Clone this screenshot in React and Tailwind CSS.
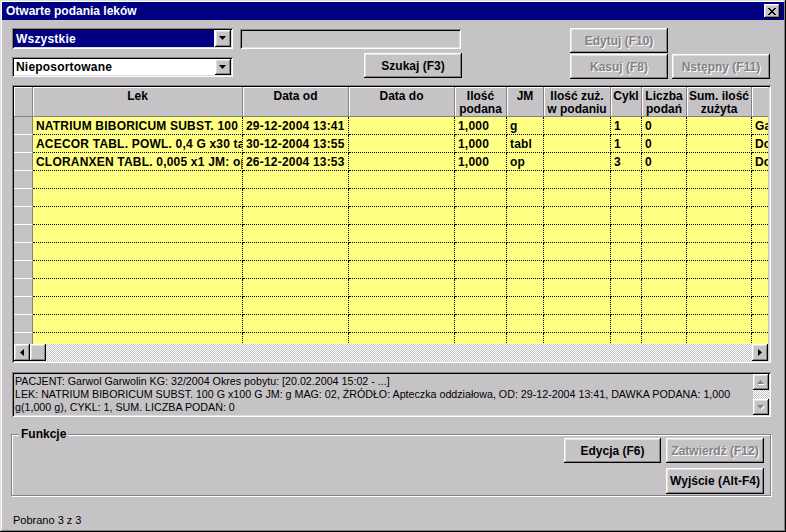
import React from "react";

const raised =
  "shadow-[inset_-1px_-1px_0_#000,inset_1px_1px_0_#fff,inset_-2px_-2px_0_#848284,inset_2px_2px_0_#dfdfdf]";
const sunken =
  "shadow-[inset_1px_1px_0_#848284,inset_-1px_-1px_0_#fff,inset_2px_2px_0_#000,inset_-2px_-2px_0_#dfdfdf]";
const checker =
  "bg-[image:repeating-conic-gradient(#c6c3c6_0_25%,#ffffff_0_50%)] bg-[length:2px_2px]";

const columns = [
  { title: ["Lek"], w: "w-[210px]" },
  { title: ["Data od"], w: "w-[106px]" },
  { title: ["Data do"], w: "w-[106px]" },
  { title: ["Ilość", "podana"], w: "w-[52px]" },
  { title: ["JM"], w: "w-[37px]" },
  { title: ["Ilość zuż.", "w podaniu"], w: "w-[67px]" },
  { title: ["Cykl"], w: "w-[31px]" },
  { title: ["Liczba", "podań"], w: "w-[45px]" },
  { title: ["Sum. ilość", "zużyta"], w: "w-[65px]" },
  { title: [""], w: "w-[60px]" },
];

const rows = [
  ["NATRIUM BIBORICUM SUBST. 100 G x100 G", "29-12-2004 13:41", "", "1,000", "g", "", "1", "0", "", "Gabinet"],
  ["ACECOR TABL. POWL. 0,4 G x30 tabl", "30-12-2004 13:55", "", "1,000", "tabl", "", "1", "0", "", "Domowe"],
  ["CLORANXEN TABL. 0,005 x1 JM: op", "26-12-2004 13:53", "", "1,000", "op", "", "3", "0", "", "Domowe"],
];

const Arrow = ({ dir, disabled }) => {
  const pts = {
    down: "0,0 7,0 3.5,4",
    up: "0,4 7,4 3.5,0",
    left: "4,0 4,7 0,3.5",
    right: "0,0 0,7 4,3.5",
  }[dir];
  const vertical = dir === "up" || dir === "down";
  const w = vertical ? 7 : 4;
  const h = vertical ? 4 : 7;
  return (
    <svg width={w + 1} height={h + 1} viewBox={`0 0 ${w + 1} ${h + 1}`}>
      {disabled && <polygon points={pts} fill="#fff" transform="translate(1,1)" />}
      <polygon points={pts} fill={disabled ? "#848284" : "#000"} />
    </svg>
  );
};

const Btn = ({ children, disabled, className = "" }) => (
  <div
    className={`${raised} flex items-center justify-center text-[12px] font-bold bg-[#c6c3c6] ${
      disabled ? "text-[#848284] [text-shadow:1px_1px_0_#fff]" : "text-black"
    } ${className}`}
  >
    {children}
  </div>
);

const Combo = ({ value, selected, className = "" }) => (
  <div className={`${sunken} bg-white flex p-[2px] w-[221px] ${className}`}>
    <div
      className={`flex-1 flex items-center pl-[2px] text-[12px] font-bold tracking-[0.2px] ${
        selected ? "bg-[#000080] text-white mr-[1px]" : "text-black"
      }`}
    >
      {value}
    </div>
    <div className={`${raised} w-[16px] bg-[#c6c3c6] flex items-center justify-center`}>
      <Arrow dir="down" />
    </div>
  </div>
);

export default function App() {
  return (
    <div className="w-[786px] h-[532px] bg-[#c6c3c6] overflow-hidden pt-[2px] px-[2px] shadow-[inset_-1px_-1px_0_#000,inset_1px_1px_0_#dfdfdf,inset_-2px_-2px_0_#848284,inset_2px_2px_0_#fff] font-['Liberation_Sans',Arial,sans-serif] text-black">
      {/* title bar */}
      <div className="h-[18px] bg-[#000080] flex items-center justify-between pl-[4px] pr-[4px]">
        <span className="text-white text-[12px] font-bold">Otwarte podania leków</span>
        <div className={`${raised} w-[16px] h-[14px] bg-[#c6c3c6] flex items-center justify-center`}>
          <svg width="8" height="7" viewBox="0 0 8 7" shapeRendering="crispEdges">
            <path d="M0 0h2v1H0zM6 0h2v1H6zM1 1h2v1H1zM5 1h2v1H5zM2 2h4v1H2zM3 3h2v1H3zM2 4h4v1H2zM1 5h2v1H1zM5 5h2v1H5zM0 6h2v1H0zM6 6h2v1H6z" fill="#000" />
          </svg>
        </div>
      </div>

      <div className="pl-[10px]">
        {/* top controls */}
        <div className="flex mt-[8px] h-[57px]">
          <div className="flex flex-col">
            <Combo value="Wszystkie" selected className="h-[21px]" />
            <Combo value="Nieposortowane" className="h-[20px] mt-[8px]" />
          </div>
          <div className="flex flex-col ml-[7px] w-[222px]">
            <div className={`${sunken} h-[20px] w-[221px] mt-[1px] bg-[#c6c3c6]`} />
            <Btn className="w-[98px] h-[25px] mt-[4px] self-end">Szukaj (F3)</Btn>
          </div>
          <div className="flex flex-col ml-[108px]">
            <Btn disabled className="w-[98px] h-[25px]">Edytuj (F10)</Btn>
            <div className="flex gap-[4px] mt-[1px]">
              <Btn disabled className="w-[98px] h-[25px]">Kasuj (F8)</Btn>
              <Btn disabled className="w-[98px] h-[25px]">Nstępny (F11)</Btn>
            </div>
          </div>
        </div>

        {/* grid */}
        <div className={`${sunken} w-[759px] h-[278px] p-[2px] flex flex-col`}>
          <div className="w-[754px] overflow-hidden flex-1 flex flex-col">
            <div className="flex h-[30px] shrink-0 border-b border-b-[#848284]">
              <div className="w-[19px] shrink-0 border-r border-r-[#848284] shadow-[inset_1px_1px_0_#fff]" />
              {columns.map((c, i) => (
                <div
                  key={i}
                  className={`${c.w} shrink-0 border-r border-r-[#848284] shadow-[inset_1px_1px_0_#fff] pt-[3px] text-center text-[12px] font-bold leading-[13px]`}
                >
                  {c.title.map((t, j) => (
                    <div key={j} className="whitespace-nowrap">{t}</div>
                  ))}
                </div>
              ))}
            </div>
            <div className="h-[227px] overflow-hidden">
              {Array.from({ length: 13 }).map((_, r) => (
                <div key={r} className="flex h-[18px]">
                  <div className="w-[19px] shrink-0 bg-[#c6c3c6] border-b border-b-white border-r border-r-[#848284]" />
                  {columns.map((c, i) => (
                    <div
                      key={i}
                      className={`${c.w} shrink-0 bg-[#ffff84] border-r border-b border-dotted border-black overflow-hidden whitespace-nowrap pl-[3px] text-[12px] font-bold tracking-[0.2px] leading-[19px]`}
                    >
                      {rows[r] ? rows[r][i] : ""}
                    </div>
                  ))}
                </div>
              ))}
            </div>
            <div className="h-[17px] flex shrink-0">
              <div className={`${raised} w-[16px] bg-[#c6c3c6] flex items-center justify-center`}>
                <Arrow dir="left" />
              </div>
              <div className={`${raised} w-[16px] bg-[#c6c3c6]`} />
              <div className={`flex-1 ${checker}`} />
              <div className={`${raised} w-[16px] bg-[#c6c3c6] flex items-center justify-center`}>
                <Arrow dir="right" />
              </div>
            </div>
          </div>
        </div>

        {/* info box */}
        <div className={`${sunken} w-[759px] h-[45px] mt-[9px] p-[2px] flex`}>
          <div className="flex-1 pl-[1px] pt-[1px] text-[10.7px] leading-[13px] whitespace-nowrap overflow-hidden">
            <div>PACJENT: Garwol Garwolin KG: 32/2004 Okres pobytu: [20.02.2004 15:02 - ...]</div>
            <div>
              LEK: NATRIUM BIBORICUM SUBST. 100 G x100 G JM: g MAG: 02, ŹRÓDŁO: Apteczka oddziałowa, OD: 29-12-2004 13:41, DAWKA PODANA: 1,000
            </div>
            <div>g(1,000 g), CYKL: 1, SUM. LICZBA PODAŃ: 0</div>
          </div>
          <div className="w-[16px] flex flex-col">
            <div className={`${raised} h-[16px] bg-[#c6c3c6] flex items-center justify-center`}>
              <Arrow dir="up" disabled />
            </div>
            <div className={`flex-1 ${checker}`} />
            <div className={`${raised} h-[16px] bg-[#c6c3c6] flex items-center justify-center`}>
              <Arrow dir="down" disabled />
            </div>
          </div>
        </div>

        {/* Funkcje group */}
        <div className="relative w-[760px] h-[62px] mt-[17px] -ml-[1px] border border-[#848284] shadow-[1px_1px_0_#fff,inset_1px_1px_0_#fff]">
          <span className="absolute -top-[8px] left-[7px] px-[2px] bg-[#c6c3c6] text-[12px] font-bold leading-[14px]">
            Funkcje
          </span>
          <div className="flex justify-end gap-[5px] pt-[3px] pr-[6px]">
            <Btn className="w-[97px] h-[25px]">Edycja (F6)</Btn>
            <div className="flex flex-col gap-[5px]">
              <Btn disabled className="w-[98px] h-[25px]">Zatwierdź (F12)</Btn>
              <Btn className="w-[98px] h-[26px]">Wyjście (Alt-F4)</Btn>
            </div>
          </div>
        </div>

        <div className="mt-[18px] pl-[1px] text-[11px] leading-[13px]">Pobrano 3 z 3</div>
      </div>
    </div>
  );
}
